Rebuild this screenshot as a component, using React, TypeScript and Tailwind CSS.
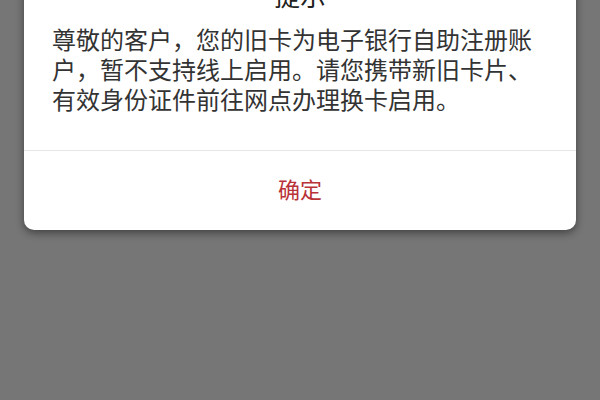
export default function App() {
  const font = {
    fontFamily: '"Noto Sans CJK SC", "Noto Sans", sans-serif',
  };

  return (
    <div className="h-[400px] w-[600px] overflow-hidden bg-[#767676]" style={font}>
      <div className="mx-[24px] mt-[-40px] w-[552px] rounded-[10px] bg-white shadow-[0_3px_8px_rgba(0,0,0,0.45)]">
        <div className="px-[28px] pt-[20px] pb-[36px]">
          <div className="mb-[14px] text-center text-[26px] leading-[30px] text-[#222]">提示</div>
          <p className="text-[24px] leading-[30px] text-[#333]">
            <span className="block">尊敬的客户，您的旧卡为电子银行自助注册账</span>
            <span className="block">户，暂不支持线上启用。请您携带新旧卡片、</span>
            <span className="block">有效身份证件前往网点办理换卡启用。</span>
          </p>
        </div>
        <div className="flex h-[80px] items-center justify-center border-t border-[#e6e6e6] pb-[4px] text-[22px] text-[#b83238]">
          确定
        </div>
      </div>
    </div>
  );
}
